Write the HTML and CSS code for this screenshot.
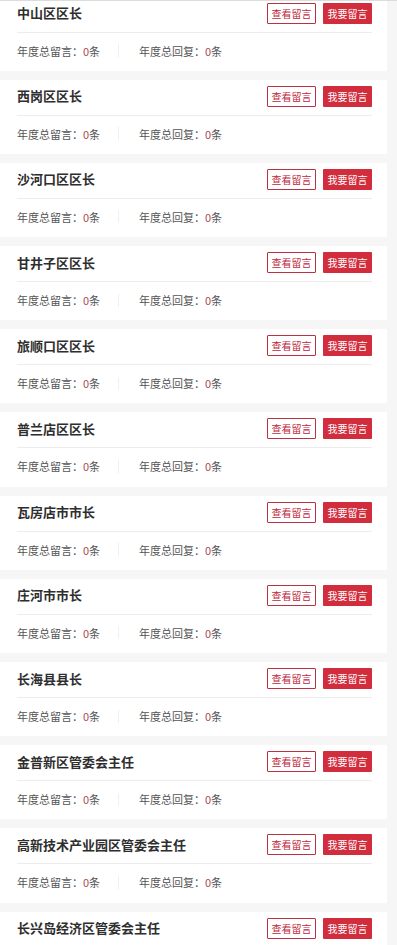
FILE: index.html
```html
<!DOCTYPE html>
<html lang="zh-CN">
<head>
<meta charset="utf-8">
<title>领导留言</title>
<link rel="stylesheet" href="styles.css">
</head>
<body>
<div class="topline"></div>
<div class="list">
  <div class="card"><div class="head"><span class="name">中山区区长</span><span class="btn btn-outline">查看留言</span><span class="btn btn-fill">我要留言</span></div><div class="stats"><span class="stat">年度总留言：<em>0</em>条</span><span class="sep"></span><span class="stat">年度总回复：<em>0</em>条</span></div></div>
  <div class="card"><div class="head"><span class="name">西岗区区长</span><span class="btn btn-outline">查看留言</span><span class="btn btn-fill">我要留言</span></div><div class="stats"><span class="stat">年度总留言：<em>0</em>条</span><span class="sep"></span><span class="stat">年度总回复：<em>0</em>条</span></div></div>
  <div class="card"><div class="head"><span class="name">沙河口区区长</span><span class="btn btn-outline">查看留言</span><span class="btn btn-fill">我要留言</span></div><div class="stats"><span class="stat">年度总留言：<em>0</em>条</span><span class="sep"></span><span class="stat">年度总回复：<em>0</em>条</span></div></div>
  <div class="card"><div class="head"><span class="name">甘井子区区长</span><span class="btn btn-outline">查看留言</span><span class="btn btn-fill">我要留言</span></div><div class="stats"><span class="stat">年度总留言：<em>0</em>条</span><span class="sep"></span><span class="stat">年度总回复：<em>0</em>条</span></div></div>
  <div class="card"><div class="head"><span class="name">旅顺口区区长</span><span class="btn btn-outline">查看留言</span><span class="btn btn-fill">我要留言</span></div><div class="stats"><span class="stat">年度总留言：<em>0</em>条</span><span class="sep"></span><span class="stat">年度总回复：<em>0</em>条</span></div></div>
  <div class="card"><div class="head"><span class="name">普兰店区区长</span><span class="btn btn-outline">查看留言</span><span class="btn btn-fill">我要留言</span></div><div class="stats"><span class="stat">年度总留言：<em>0</em>条</span><span class="sep"></span><span class="stat">年度总回复：<em>0</em>条</span></div></div>
  <div class="card"><div class="head"><span class="name">瓦房店市市长</span><span class="btn btn-outline">查看留言</span><span class="btn btn-fill">我要留言</span></div><div class="stats"><span class="stat">年度总留言：<em>0</em>条</span><span class="sep"></span><span class="stat">年度总回复：<em>0</em>条</span></div></div>
  <div class="card"><div class="head"><span class="name">庄河市市长</span><span class="btn btn-outline">查看留言</span><span class="btn btn-fill">我要留言</span></div><div class="stats"><span class="stat">年度总留言：<em>0</em>条</span><span class="sep"></span><span class="stat">年度总回复：<em>0</em>条</span></div></div>
  <div class="card"><div class="head"><span class="name">长海县县长</span><span class="btn btn-outline">查看留言</span><span class="btn btn-fill">我要留言</span></div><div class="stats"><span class="stat">年度总留言：<em>0</em>条</span><span class="sep"></span><span class="stat">年度总回复：<em>0</em>条</span></div></div>
  <div class="card"><div class="head"><span class="name">金普新区管委会主任</span><span class="btn btn-outline">查看留言</span><span class="btn btn-fill">我要留言</span></div><div class="stats"><span class="stat">年度总留言：<em>0</em>条</span><span class="sep"></span><span class="stat">年度总回复：<em>0</em>条</span></div></div>
  <div class="card"><div class="head"><span class="name">高新技术产业园区管委会主任</span><span class="btn btn-outline">查看留言</span><span class="btn btn-fill">我要留言</span></div><div class="stats"><span class="stat">年度总留言：<em>0</em>条</span><span class="sep"></span><span class="stat">年度总回复：<em>0</em>条</span></div></div>
  <div class="card"><div class="head"><span class="name">长兴岛经济区管委会主任</span><span class="btn btn-outline">查看留言</span><span class="btn btn-fill">我要留言</span></div><div class="stats"><span class="stat">年度总留言：<em>0</em>条</span><span class="sep"></span><span class="stat">年度总回复：<em>0</em>条</span></div></div>
</div>
</body>
</html>
```
FILE: styles.css
```css
html, body {
  margin: 0;
  padding: 0;
  background: #f6f6f6;
  font-family: "Noto Sans CJK SC", "Noto Sans", sans-serif;
  height: 945px;
  overflow: hidden;
}
.topline {
  position: relative;
  z-index: 1;
  height: 1px;
  background: #dcdcdc;
}
.list {
  margin-top: -4.5px;
  padding-right: 10px;
  display: flex;
  flex-direction: column;
  gap: 9px;
}
.card {
  flex: none;
  background: #fff;
  height: 74.2px;
  padding: 0 15px 0 17px;
  overflow: hidden;
}
.head {
  display: flex;
  align-items: center;
  padding: 6px 0 8px;
  border-bottom: 1px solid #ececec;
}
.name {
  flex: 1;
  font-size: 13px;
  font-weight: 700;
  color: #2e2e2e;
  line-height: 20px;
}
.btn {
  box-sizing: border-box;
  width: 49px;
  height: 21px;
  display: flex;
  align-items: center;
  justify-content: center;
  font-size: 10px;
  border-radius: 1px;
}
.btn-outline {
  border: 1px solid #b8323f;
  color: #c0283a;
  background: #fff;
}
.btn-fill {
  margin-left: 7px;
  background: #d12d3d;
  color: #fff;
}
.stats {
  display: flex;
  align-items: center;
  padding: 10px 0 0;
  font-size: 11px;
  line-height: 16px;
  color: #555;
}
.stat {
  white-space: nowrap;
}
.stat:first-child {
  width: 101px;
}
.stat em {
  font-style: normal;
  color: #a84b58;
}
.sep {
  width: 1px;
  height: 13px;
  background: #f0f0f0;
  margin-right: 20px;
}
```
